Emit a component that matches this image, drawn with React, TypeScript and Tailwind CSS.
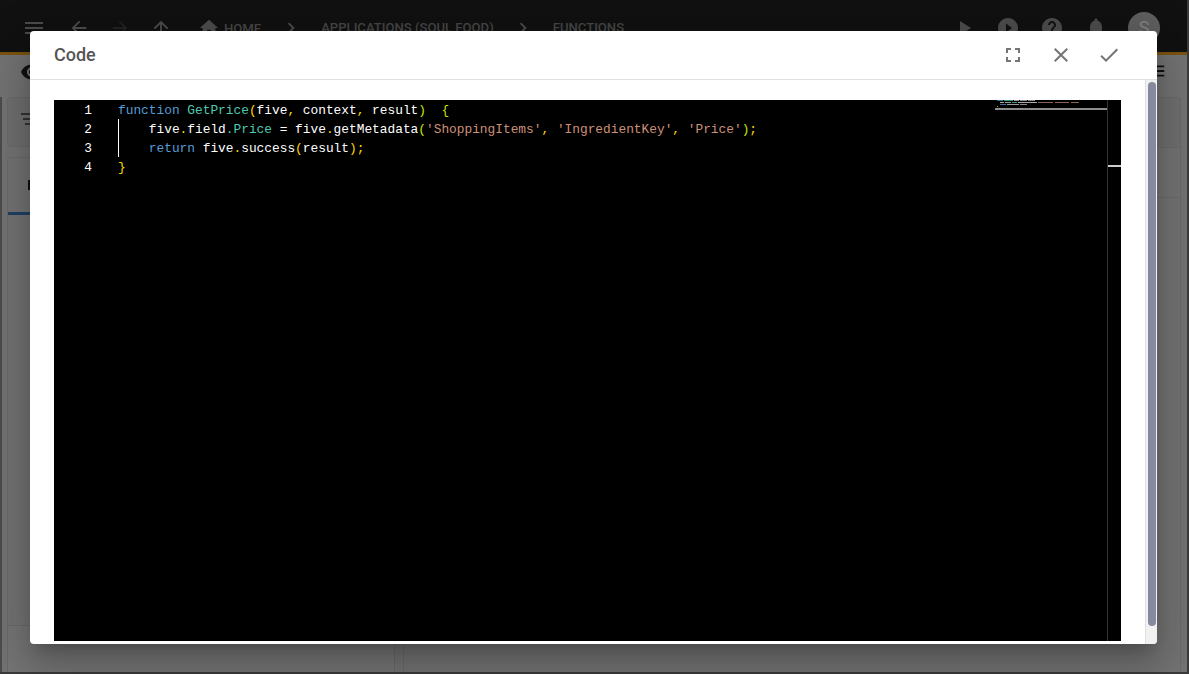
import {
  MdArrowBack,
  MdArrowForward,
  MdArrowUpward,
  MdCheck,
  MdChevronRight,
  MdClose,
  MdFullscreen,
  MdHelp,
  MdHome,
  MdMenu,
  MdNotifications,
  MdPlayArrow,
  MdPlayCircleFilled,
  MdVisibility,
} from "react-icons/md";

const Kw = ({ children }: { children: string }) => <span className="text-[#569cd6]">{children}</span>;
const Ty = ({ children }: { children: string }) => <span className="text-[#4ec9b0]">{children}</span>;
const Str = ({ children }: { children: string }) => <span className="text-[#ce9178]">{children}</span>;
const P = ({ children }: { children: string }) => <span className="text-[#ffd700]">{children}</span>;
const L = ({ children }: { children: string }) => <span className="text-[#c6e600]">{children}</span>;

const Line = ({ n, children }: { n: number; children?: React.ReactNode }) => (
  <div className="flex h-[19px] items-center pt-[2px]">
    <span className="w-[38px] text-right text-white">{n}</span>
    <span className="ml-[26px] whitespace-pre text-white">{children}</span>
  </div>
);

const Crumb = ({ children }: { children: string }) => (
  <span className="text-[13.1px] font-medium text-[#8b8b8b]">{children}</span>
);

function Background() {
  return (
    <div className="flex h-[674px] w-[1189px] flex-col overflow-hidden border-b-2 border-r-2 border-[#777] bg-[#e6e6e6] font-['Roboto',sans-serif]">
      <header className="flex h-[55px] shrink-0 items-center border-b-[3px] border-[#f5a623] bg-[#222222] pl-[22px] pr-[27px] pt-[3px] text-[#999]">
        <MdMenu size={24} />
        <MdArrowBack size={22} className="ml-[22px]" />
        <MdArrowForward size={22} className="ml-[19px] text-[#444]" />
        <MdArrowUpward size={22} className="ml-[19px]" />
        <MdHome size={22} className="ml-[26px]" />
        <span className="ml-[4px]"><Crumb>HOME</Crumb></span>
        <MdChevronRight size={22} className="mx-[19px]" />
        <Crumb>APPLICATIONS (SOUL FOOD)</Crumb>
        <MdChevronRight size={22} className="mx-[18.5px]" />
        <Crumb>FUNCTIONS</Crumb>
        <div className="ml-auto flex items-center gap-[20px]">
          <MdPlayArrow size={24} />
          <MdPlayCircleFilled size={24} />
          <MdHelp size={24} />
          <MdNotifications size={24} />
          <div className="flex h-8 w-8 items-center justify-center rounded-full bg-[#bdbdbd] text-lg text-white">S</div>
        </div>
      </header>
      <div className="flex h-[42px] shrink-0 justify-between pl-5 pr-5 pt-[5px] text-[#222]">
        <MdVisibility size={24} />
        <MdMenu size={22} />
      </div>
      <div className="flex min-h-0 flex-1 gap-2 border-l-2 border-[#999] pl-[5px] pr-[6px]">
        <div className="flex w-[388px] flex-col gap-[10px]">
          <div className="h-[50px] rounded border border-[#d4d4d4] bg-[#dedede]">
            <div className="ml-[13px] mt-[15px] flex w-[14px] flex-col items-center gap-[3px]">
              <span className="h-0.5 w-[14px] bg-[#666]" />
              <span className="h-0.5 w-[10px] bg-[#666]" />
              <span className="h-0.5 w-[6px] bg-[#666]" />
            </div>
          </div>
          <div className="flex flex-1 flex-col rounded-t border border-b-0 border-[#d4d4d4]">
            <div className="flex h-[57px] items-center border-b-[3px] border-[#4080cc] pl-5">
              <span className="h-[10px] w-[5px] bg-[#222]" />
            </div>
            <div className="flex-1" />
            <div className="h-[47px] border-t border-[#d4d4d4] bg-[#ebebeb]" />
          </div>
        </div>
        <div className="flex flex-1 flex-col">
          <div className="h-[50px] rounded-t border border-b-0 border-[#d4d4d4] bg-[#dedede]" />
          <div className="h-[50px] border-x border-t border-[#d4d4d4]" />
          <div className="flex-1 border-x border-t border-[#d4d4d4]" />
        </div>
      </div>
    </div>
  );
}

// tiny code preview top right of the editor
function Minimap() {
  return (
    <svg width="112" height="10" className="absolute right-[14px] top-0">
      <rect x="2" y="0" width="6" height="1" fill="#3f6f9c" />
      <rect x="9" y="0" width="9" height="1" fill="#3a9483" />
      <rect x="19" y="0" width="5" height="1" fill="#999999" />
      <rect x="25" y="0" width="7" height="1" fill="#888888" />
      <rect x="33" y="0" width="7" height="1" fill="#888888" />
      <rect x="5" y="2" width="4" height="1" fill="#aaaaaa" />
      <rect x="10" y="2" width="6" height="1" fill="#999999" />
      <rect x="17" y="2" width="5" height="1" fill="#3a9483" />
      <rect x="23" y="2" width="19" height="1" fill="#aaaaaa" />
      <rect x="43" y="2" width="15" height="1" fill="#8a6450" />
      <rect x="60" y="2" width="14" height="1" fill="#8a6450" />
      <rect x="76" y="2" width="8" height="1" fill="#8a6450" />
      <rect x="5" y="4" width="6" height="1" fill="#3f6f9c" />
      <rect x="12" y="4" width="12" height="1" fill="#999999" />
      <rect x="25" y="4" width="7" height="1" fill="#888888" />
      <rect x="2" y="6" width="1" height="1" fill="#b8a400" />
      <rect x="0" y="8" width="112" height="2" fill="#8d8d8d" />
    </svg>
  );
}

function CodeDialog() {
  return (
    <div className="absolute inset-0 bg-black/50">
      <div className="absolute left-[30px] top-[31px] flex h-[613px] w-[1127px] flex-col overflow-hidden rounded bg-white font-['Roboto',sans-serif] shadow-[0_11px_15px_-7px_rgba(0,0,0,0.2),0_24px_38px_3px_rgba(0,0,0,0.14),0_9px_46px_8px_rgba(0,0,0,0.12)]">
        <div className="flex h-[49px] shrink-0 items-center border-b border-[#e0e0e0] pb-[2px] pl-6 pr-[36px]">
          <h2 className="text-[18px] font-medium text-[#555]">Code</h2>
          <div className="ml-auto flex items-center gap-6 pt-[2px] text-[#757575]">
            <MdFullscreen size={24} />
            <MdClose size={24} />
            <MdCheck size={24} />
          </div>
        </div>
        <div className="flex min-h-0 flex-1">
          <div className="min-w-0 flex-1 pb-[3px] pl-6 pr-[24px] pt-5">
            <div className="relative h-full bg-black font-['Liberation_Mono',monospace] text-[12.83px]">
              <div className="relative z-10">
                <Line n={1}>
                  <Kw>function</Kw> <Ty>GetPrice</Ty><P>(</P>five<P>,</P> context<P>,</P> result<L>)</L>  <L>{"{"}</L>
                </Line>
                <Line n={2}>
                  {"    "}five<P>.</P>field<Ty>.</Ty><Ty>Price</Ty> = five<P>.</P>getMetadata<L>(</L><Str>'ShoppingItems'</Str><P>,</P> <Str>'IngredientKey'</Str><P>,</P> <Str>'Price'</Str><L>)</L><P>;</P>
                </Line>
                <Line n={3}>
                  {"    "}<Kw>return</Kw> five<P>.</P>success<P>(</P>result<P>)</P><P>;</P>
                </Line>
                <Line n={4}>
                  <P>{"}"}</P>
                </Line>
              </div>
              <span className="absolute left-[64px] top-[19px] h-[38px] w-px bg-white" />
              <Minimap />
              <span className="absolute bottom-0 right-[13px] top-0 w-px bg-[#333]" />
              <span className="absolute right-0 top-[65px] h-0.5 w-[13px] bg-[#ccc]" />
            </div>
          </div>
          <div className="flex w-[12px] shrink-0 justify-center border-l border-[#e0e0e0] bg-[#f1f1f1] pt-[2px]">
            <div className="h-[544px] w-2 rounded-full bg-[#858a9e]" />
          </div>
        </div>
      </div>
    </div>
  );
}

export default function App() {
  return (
    <div className="relative h-[674px] w-[1189px] overflow-hidden">
      <Background />
      <CodeDialog />
    </div>
  );
}
